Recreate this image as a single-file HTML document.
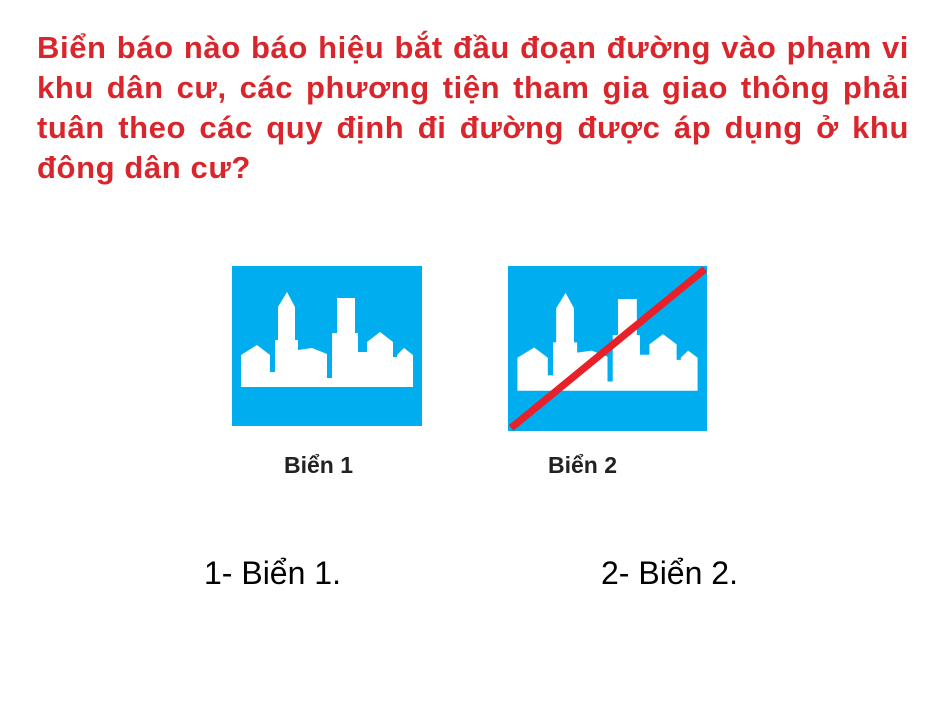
<!DOCTYPE html>
<html><head><meta charset="utf-8"><style>
body{margin:0;width:945px;height:709px;background:#fff;position:relative;overflow:hidden;font-family:"Liberation Sans",sans-serif}
.q{position:absolute;left:37px;top:28px;width:872px;color:#d9262c;font-weight:bold;font-size:31px;letter-spacing:0.6px;line-height:40px}
.q div{text-align:justify;text-align-last:justify;white-space:nowrap}
.q div.l{text-align-last:left}
.s{position:absolute}
.lbl{position:absolute;font-weight:bold;font-size:23px;color:#222;top:452px}
.a{position:absolute;top:555px;font-size:32px;color:#000}
</style></head><body>
<div class="q"><div>Biển báo nào báo hiệu bắt đầu đoạn đường vào phạm vi</div><div>khu dân cư, các phương tiện tham gia giao thông phải</div><div>tuân theo các quy định đi đường được áp dụng ở khu</div><div class="l">đông dân cư?</div></div>
<svg class="s" style="left:232px;top:266px" width="190" height="160" viewBox="0 0 190 160" preserveAspectRatio="none">
<rect width="190" height="160" fill="#00aeef"/>
<path fill="#fff" d="M9 121 L9 89 L25 79 L38 89 L38 106 L43 106 L43 74 L46 74 L46 41 L55 26 L63 41 L63 74 L66 74 L66 84 L80 82 L95 88 L95 112 L100 112 L100 67 L105 67 L105 32 L123 32 L123 67 L126 67 L126 86 L135 86 L135 76 L148 66 L161 76 L161 91 L165 91 L165 89 L172 82 L181 89 L181 121 Z"/>
</svg>
<svg class="s" style="left:508px;top:266px" width="199" height="165" viewBox="0 0 190 160" preserveAspectRatio="none">
<rect width="190" height="160" fill="#00aeef"/>
<path fill="#fff" d="M9 121 L9 89 L25 79 L38 89 L38 106 L43 106 L43 74 L46 74 L46 41 L55 26 L63 41 L63 74 L66 74 L66 84 L80 82 L95 88 L95 112 L100 112 L100 67 L105 67 L105 32 L123 32 L123 67 L126 67 L126 86 L135 86 L135 76 L148 66 L161 76 L161 91 L165 91 L165 89 L172 82 L181 89 L181 121 Z"/>
<line x1="3" y1="157" x2="188" y2="3" stroke="#e8202a" stroke-width="7"/>
</svg>
<div class="lbl" style="left:284px">Biển 1</div>
<div class="lbl" style="left:548px">Biển 2</div>
<div class="a" style="left:204px">1- Biển 1.</div>
<div class="a" style="left:601px">2- Biển 2.</div>
</body></html>
